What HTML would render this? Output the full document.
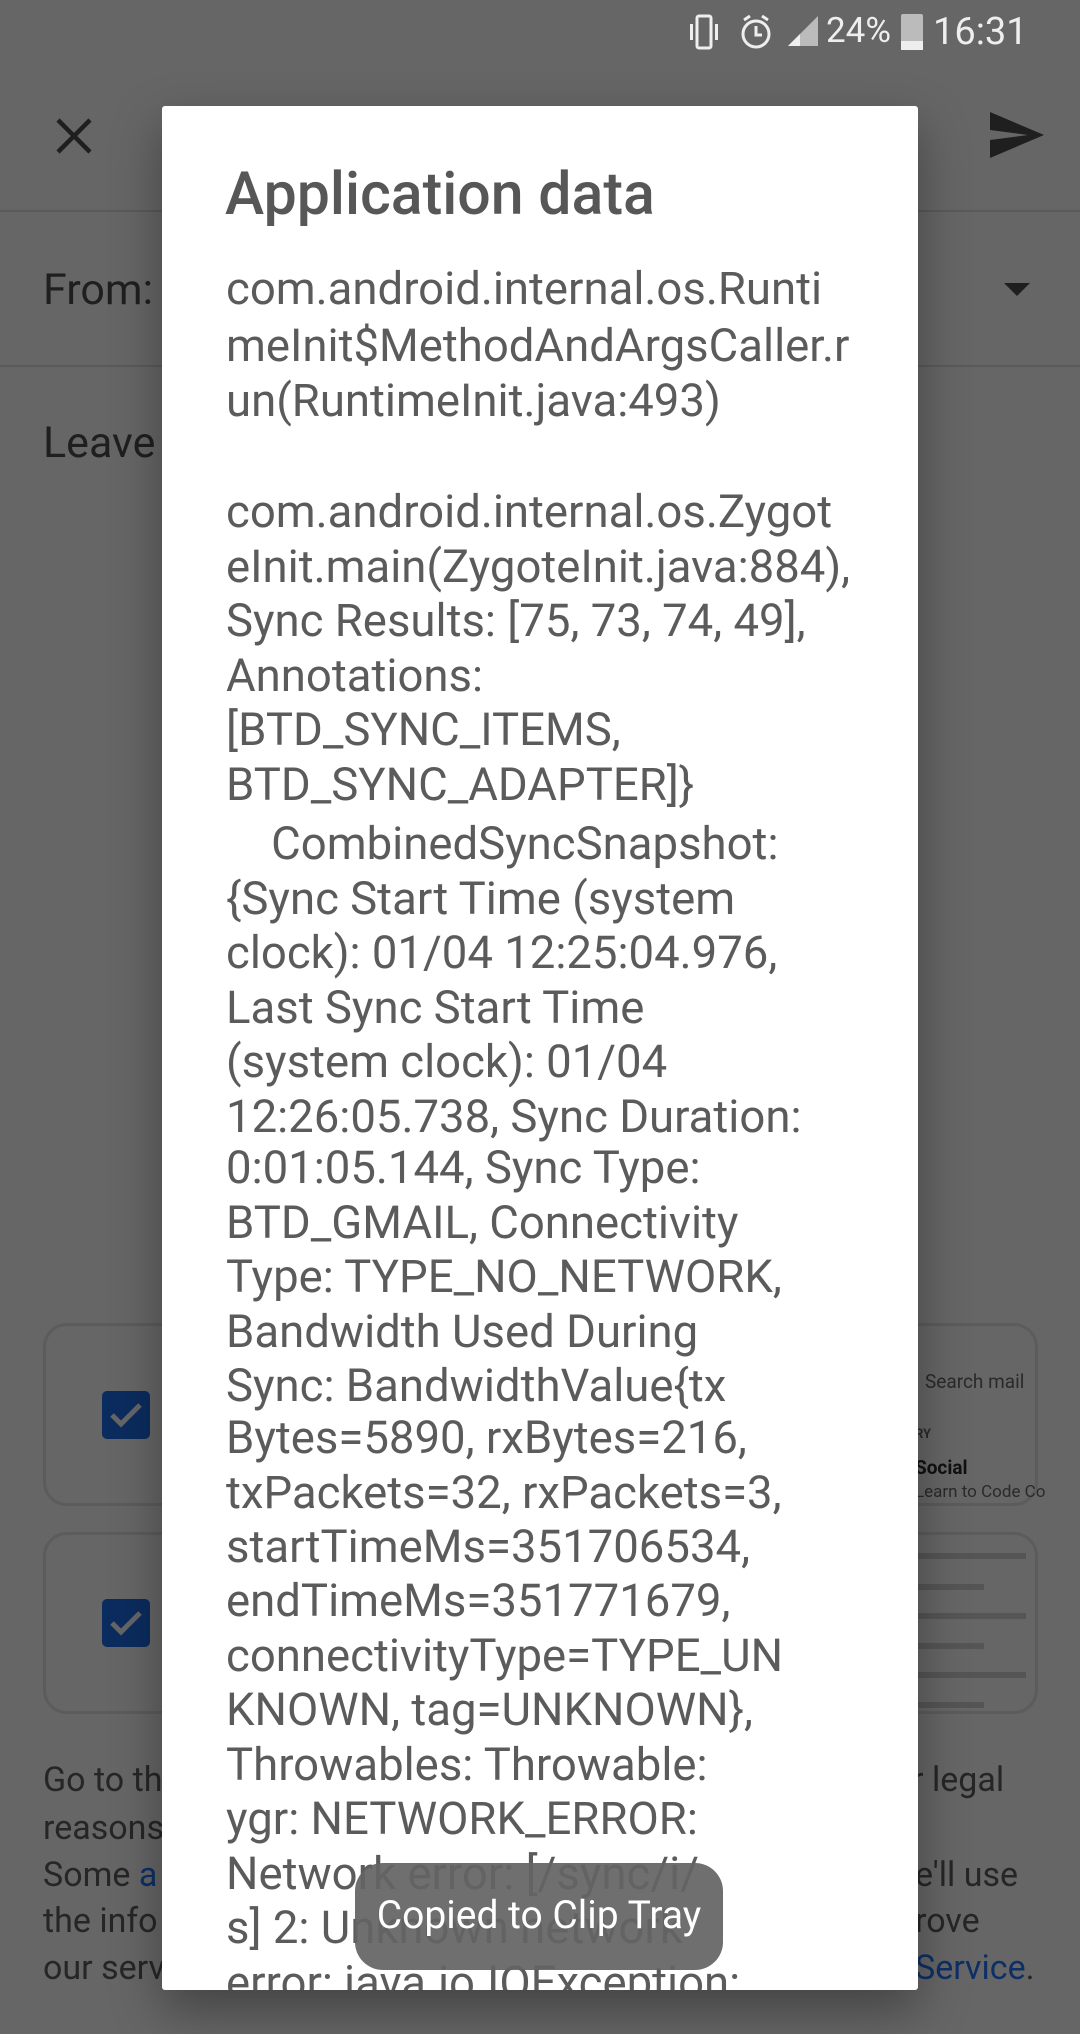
<!DOCTYPE html>
<html><head><meta charset="utf-8"><style>
*{margin:0;padding:0;box-sizing:border-box}
body{width:1080px;height:2034px;overflow:hidden;background:#666;font-family:"Roboto","Liberation Sans",sans-serif;position:relative}
.a{position:absolute;white-space:nowrap}
.bg{color:#1f1f1f;font-size:43px}
.bt{color:#262626;font-size:34px;line-height:47px}
.card{position:absolute;border:3px solid #5c5c5c;border-radius:24px}
.cb{position:absolute;width:48px;height:48px;background:#0b2c5e;border-radius:5px}
.dlg{position:absolute;left:162px;top:106px;width:756px;height:1884px;background:#fff;border-radius:3px;overflow:hidden;box-shadow:0 20px 50px rgba(0,0,0,.35)}
.l{position:absolute;left:64px;white-space:nowrap;font-size:45.5px;line-height:54px;color:#5b5b5b;letter-spacing:0}
</style></head><body>
<div class="a" style="left:688px;top:10px;width:32px;height:44px">
<svg width="32" height="44" viewBox="0 0 32 44"><rect x="9" y="6" width="14" height="32" rx="2" fill="none" stroke="#eee" stroke-width="3"/><rect x="2" y="14" width="3" height="16" fill="#eee"/><rect x="27" y="14" width="3" height="16" fill="#eee"/></svg></div>
<div class="a" style="left:738px;top:12px"><svg width="36" height="40" viewBox="0 0 36 40"><circle cx="18" cy="22" r="13" fill="none" stroke="#eee" stroke-width="3"/><path d="M18 14v9h6" fill="none" stroke="#eee" stroke-width="3"/><path d="M6 8l6-4M30 8l-6-4" stroke="#eee" stroke-width="3"/></svg></div>
<div class="a" style="left:786px;top:14px"><svg width="34" height="34" viewBox="0 0 34 34"><path d="M32 2V32H2Z" fill="#bbb"/><path d="M14 20V32H2Z" fill="#eee"/></svg></div>
<div class="a" style="left:826px;top:10px;font-size:35px;color:#eee">24%</div>
<div class="a" style="left:901px;top:14px;width:22px;height:36px;background:#bbb;border-radius:2px"><div style="position:absolute;left:0;right:0;bottom:0;height:9px;background:#eee"></div></div>
<div class="a" style="left:933px;top:10px;font-size:38px;color:#eee">16:31</div>
<div class="a" style="left:54px;top:116px"><svg width="40" height="40" viewBox="0 0 40 40"><path d="M4 4L36 36M36 4L4 36" stroke="#1f1f1f" stroke-width="4.5"/></svg></div>
<div class="a" style="left:988px;top:110px"><svg width="58" height="50" viewBox="0 0 58 50"><path d="M2 2L56 25L2 48L2 30L40 25L2 20Z" fill="#1f1f1f"/></svg></div>
<div class="a" style="left:0;top:210px;width:1080px;height:2px;background:#5a5a5a"></div>
<div class="a bg" style="left:43px;top:265px">From:</div>
<div class="a" style="left:1004px;top:283px;width:0;height:0;border-left:13px solid transparent;border-right:13px solid transparent;border-top:13px solid #1f1f1f"></div>
<div class="a" style="left:0;top:365px;width:1080px;height:2px;background:#5a5a5a"></div>
<div class="a bg" style="left:43px;top:418px">Leave</div>
<div class="a bg" style="left:895px;top:418px">s</div>
<div class="card" style="left:43px;top:1323px;width:995px;height:183px"></div>
<div class="card" style="left:43px;top:1532px;width:995px;height:182px"></div>
<div class="cb" style="left:102px;top:1391px"><svg width="48" height="48" viewBox="0 0 48 48"><path d="M10 24L19 33L38 14" fill="none" stroke="#666" stroke-width="5"/></svg></div>
<div class="cb" style="left:102px;top:1599px"><svg width="48" height="48" viewBox="0 0 48 48"><path d="M10 24L19 33L38 14" fill="none" stroke="#666" stroke-width="5"/></svg></div>
<div class="a" style="left:925px;top:1370px;font-size:19px;color:#2a2a2a">Search mail</div>
<div class="a" style="left:915px;top:1427px;font-size:13px;color:#2a2a2a;font-weight:bold">RY</div>
<div class="a" style="left:915px;top:1456px;font-size:19px;color:#111;font-weight:bold">Social</div>
<div class="a" style="left:915px;top:1482px;font-size:17px;color:#2a2a2a">Learn to Code Co</div>
<div class="a" style="left:918px;top:1553px;width:108px;height:6px;background:#555"></div>
<div class="a" style="left:918px;top:1584px;width:66px;height:6px;background:#555"></div>
<div class="a" style="left:918px;top:1613px;width:108px;height:6px;background:#555"></div>
<div class="a" style="left:918px;top:1643px;width:66px;height:6px;background:#555"></div>
<div class="a" style="left:918px;top:1672px;width:108px;height:6px;background:#555"></div>
<div class="a" style="left:918px;top:1702px;width:66px;height:6px;background:#555"></div>
<div class="a bt" style="left:43px;top:1757px">Go to th</div>
<div class="a bt" style="left:912px;top:1757px">r legal</div>
<div class="a bt" style="left:43px;top:1805px">reasons</div>
<div class="a bt" style="left:43px;top:1852px">Some <span style="color:#0e2f66">a</span></div>
<div class="a bt" style="left:915px;top:1852px">e'll use</div>
<div class="a bt" style="left:43px;top:1898px">the info</div>
<div class="a bt" style="left:915px;top:1898px">rove</div>
<div class="a bt" style="left:43px;top:1945px">our serv</div>
<div class="a bt" style="left:915px;top:1945px;color:#0e2f66">Service<span style="color:#262626">.</span></div>
<div class="dlg">
<div class="a" style="left:63px;top:54px;font-size:59px;color:#575757;font-weight:500">Application data</div>
<div class="l" style="top:157px">com.android.internal.os.Runti</div>
<div class="l" style="top:214px">meInit$MethodAndArgsCaller.r</div>
<div class="l" style="top:269px">un(RuntimeInit.java:493)</div>
<div class="l" style="top:380px">com.android.internal.os.Zygot</div>
<div class="l" style="top:435px">eInit.main(ZygoteInit.java:884),</div>
<div class="l" style="top:489px">Sync Results: [75, 73, 74, 49],</div>
<div class="l" style="top:544px">Annotations:</div>
<div class="l" style="top:598px">[BTD_SYNC_ITEMS,</div>
<div class="l" style="top:653px">BTD_SYNC_ADAPTER]}</div>
<div class="l" style="top:712px">&nbsp;&nbsp;&nbsp;&nbsp;CombinedSyncSnapshot:</div>
<div class="l" style="top:767px">{Sync Start Time (system</div>
<div class="l" style="top:821px">clock): 01/04 12:25:04.976,</div>
<div class="l" style="top:876px">Last Sync Start Time</div>
<div class="l" style="top:930px">(system clock): 01/04</div>
<div class="l" style="top:985px">12:26:05.738, Sync Duration:</div>
<div class="l" style="top:1036px">0:01:05.144, Sync Type:</div>
<div class="l" style="top:1091px">BTD_GMAIL, Connectivity</div>
<div class="l" style="top:1145px">Type: TYPE_NO_NETWORK,</div>
<div class="l" style="top:1200px">Bandwidth Used During</div>
<div class="l" style="top:1254px">Sync: BandwidthValue{tx</div>
<div class="l" style="top:1306px">Bytes=5890, rxBytes=216,</div>
<div class="l" style="top:1361px">txPackets=32, rxPackets=3,</div>
<div class="l" style="top:1415px">startTimeMs=351706534,</div>
<div class="l" style="top:1469px">endTimeMs=351771679,</div>
<div class="l" style="top:1524px">connectivityType=TYPE_UN</div>
<div class="l" style="top:1578px">KNOWN, tag=UNKNOWN},</div>
<div class="l" style="top:1633px">Throwables: Throwable:</div>
<div class="l" style="top:1687px">ygr: NETWORK_ERROR:</div>
<div class="l" style="top:1742px">Network error: [/sync/i/</div>
<div class="l" style="top:1796px">s] 2: Unknown network</div>
<div class="l" style="top:1851px">error: java.io.IOException:</div>
</div>
<div class="a" style="left:355px;top:1863px;width:368px;height:107px;border-radius:28px;background:rgba(100,100,100,.93);color:#fff;font-size:39px;text-align:center;line-height:104px">Copied to Clip Tray</div>
</body></html>
